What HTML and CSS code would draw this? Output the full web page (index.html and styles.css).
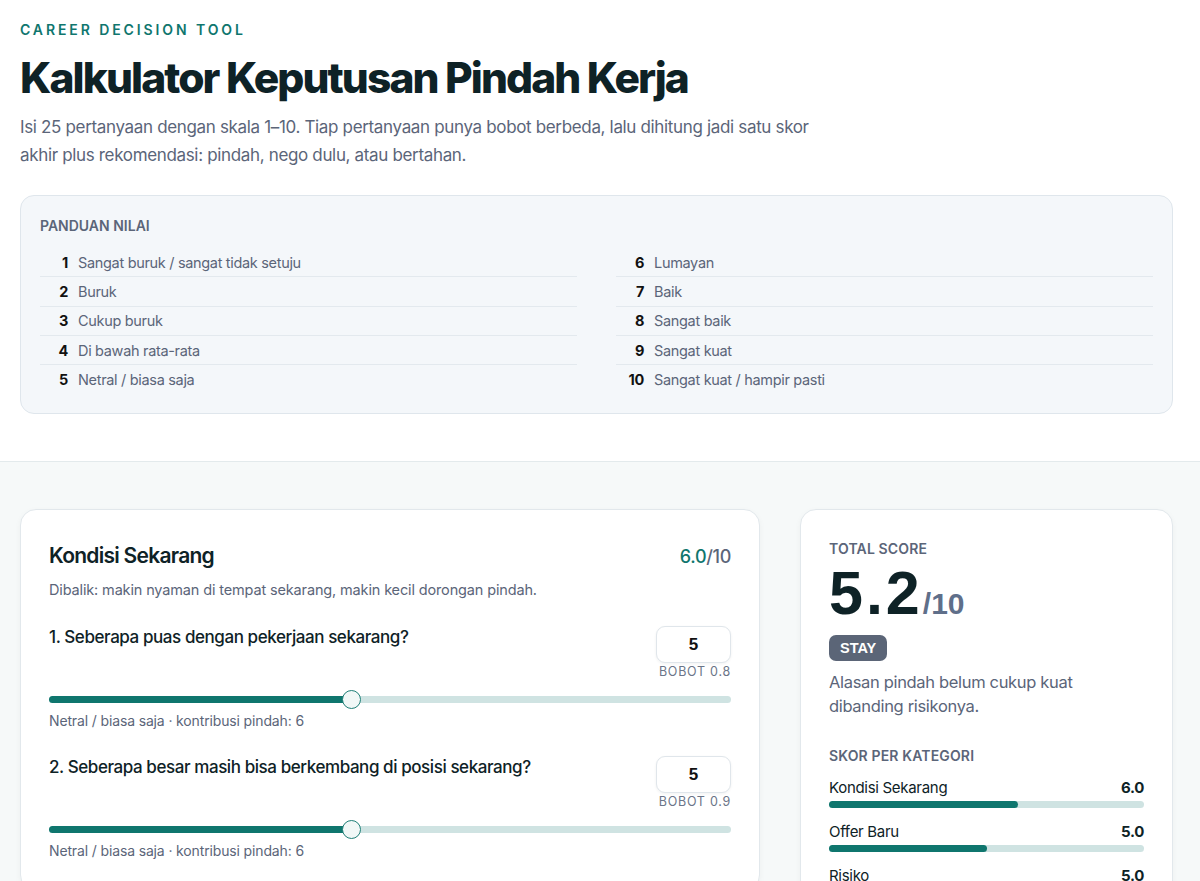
FILE: index.html
```html
<!DOCTYPE html>
<html lang="id">
<head>
<meta charset="utf-8">
<title>Kalkulator Keputusan Pindah Kerja</title>
<link rel="stylesheet" href="styles.css">
</head>
<body>
<header class="hero">
  <div class="eyebrow">CAREER DECISION TOOL</div>
  <h1 class="title">Kalkulator Keputusan Pindah Kerja</h1>
  <p class="lead">Isi 25 pertanyaan dengan skala 1–10. Tiap pertanyaan punya bobot berbeda, lalu dihitung jadi satu skor akhir plus rekomendasi: pindah, nego dulu, atau bertahan.</p>
  <section class="guide">
    <div class="guide-title">PANDUAN NILAI</div>
    <div class="guide-grid">
      <ul class="guide-list">
        <li><b>1</b><span>Sangat buruk / sangat tidak setuju</span></li>
        <li><b>2</b><span>Buruk</span></li>
        <li><b>3</b><span>Cukup buruk</span></li>
        <li><b>4</b><span>Di bawah rata-rata</span></li>
        <li><b>5</b><span>Netral / biasa saja</span></li>
      </ul>
      <ul class="guide-list">
        <li><b>6</b><span>Lumayan</span></li>
        <li><b>7</b><span>Baik</span></li>
        <li><b>8</b><span>Sangat baik</span></li>
        <li><b>9</b><span>Sangat kuat</span></li>
        <li><b>10</b><span>Sangat kuat / hampir pasti</span></li>
      </ul>
    </div>
  </section>
</header>
<main class="workspace">
  <section class="card questions">
    <div class="card-head">
      <h2>Kondisi Sekarang</h2>
      <div class="cat-score"><span class="accent">6.0</span>/10</div>
    </div>
    <p class="card-desc">Dibalik: makin nyaman di tempat sekarang, makin kecil dorongan pindah.</p>

    <div class="question">
      <div class="q-top">
        <div class="q-label">1. Seberapa puas dengan pekerjaan sekarang?</div>
        <div class="q-side">
          <div class="q-input">5</div>
          <div class="q-weight">BOBOT 0.8</div>
        </div>
      </div>
      <div class="slider"><div class="slider-fill" style="width:44.4%"></div><div class="slider-thumb" style="left:44.4%"></div></div>
      <div class="q-caption">Netral / biasa saja · kontribusi pindah: 6</div>
    </div>

    <div class="question">
      <div class="q-top">
        <div class="q-label">2. Seberapa besar masih bisa berkembang di posisi sekarang?</div>
        <div class="q-side">
          <div class="q-input">5</div>
          <div class="q-weight">BOBOT 0.9</div>
        </div>
      </div>
      <div class="slider"><div class="slider-fill" style="width:44.4%"></div><div class="slider-thumb" style="left:44.4%"></div></div>
      <div class="q-caption">Netral / biasa saja · kontribusi pindah: 6</div>
    </div>
  </section>

  <aside class="card summary">
    <div class="sum-label">TOTAL SCORE</div>
    <div class="total"><span class="total-num">5.2</span><span class="total-den">/10</span></div>
    <div class="badge">STAY</div>
    <p class="verdict">Alasan pindah belum cukup kuat dibanding risikonya.</p>
    <div class="sum-label cat-title">SKOR PER KATEGORI</div>
    <div class="cat-row">
      <div class="cat-line"><span>Kondisi Sekarang</span><b>6.0</b></div>
      <div class="bar"><div class="bar-fill" style="width:60%"></div></div>
    </div>
    <div class="cat-row">
      <div class="cat-line"><span>Offer Baru</span><b>5.0</b></div>
      <div class="bar"><div class="bar-fill" style="width:50%"></div></div>
    </div>
    <div class="cat-row">
      <div class="cat-line"><span>Risiko</span><b>5.0</b></div>
      <div class="bar"><div class="bar-fill" style="width:50%"></div></div>
    </div>
  </aside>
</main>
</body>
</html>
```
FILE: styles.css
```css
* { box-sizing: border-box; }
html, body { margin: 0; padding: 0; }
body {
  font-family: Inter, "Noto Sans", "Liberation Sans", sans-serif;
  color: #0f2226;
  background: #ffffff;
  letter-spacing: -0.02em;
}
.hero {
  padding: 20px 27px 47px 20px;
  background: #fff;
  border-bottom: 1px solid #e3eaec;
}
.eyebrow {
  color: #0f766e;
  font-size: 14px;
  font-weight: 600;
  letter-spacing: 2.9px;
  line-height: 20px;
}
.title {
  margin: 13px 0 0;
  font-size: 42.5px;
  font-weight: 800;
  letter-spacing: -0.045em;
  line-height: 50px;
  color: #0e2226;
}
.lead {
  margin: 10px 0 0;
  max-width: 800px;
  font-size: 17px;
  line-height: 28px;
  color: #5b6579;
  letter-spacing: -0.02em;
}
.guide {
  margin-top: 26px;
  background: #f4f7fa;
  border: 1px solid #dfe6ec;
  border-radius: 14px;
  padding: 20px 19px 19px 19px;
}
.guide-title {
  font-size: 14px;
  font-weight: 600;
  color: #5b6579;
  letter-spacing: 0;
  line-height: 20px;
}
.guide-grid {
  margin-top: 12px;
  display: grid;
  grid-template-columns: 1fr 1fr;
  column-gap: 39px;
}
.guide-list { list-style: none; margin: 0; padding: 0; }
.guide-list li {
  display: flex;
  align-items: center;
  height: 29.3px;
  border-bottom: 1px solid #e3e9ee;
  font-size: 14.5px;
  color: #5b6579;
}
.guide-list li:last-child { border-bottom: none; }
.guide-list b {
  width: 28px;
  text-align: right;
  margin-right: 10px;
  color: #111;
  font-weight: 700;
}
.workspace {
  background: #f6f9f9;
  padding: 47px 27px 40px 20px;
  display: grid;
  grid-template-columns: 740px 1fr;
  column-gap: 40px;
  align-items: start;
}
.card {
  background: #fff;
  border: 1px solid #e2e8ec;
  border-radius: 16px;
  box-shadow: 0 2px 6px rgba(15, 34, 38, 0.04);
}
.questions { padding: 31px 28px 30px 28px; }
.card-head {
  display: flex;
  justify-content: space-between;
  align-items: center;
}
.card-head h2 {
  margin: 0;
  font-size: 21px;
  font-weight: 600;
  letter-spacing: -0.035em;
  line-height: 30px;
  color: #0e2226;
}
.cat-score { font-size: 18px; font-weight: 500; color: #5b6579; }
.cat-score .accent { color: #0f766e; }
.card-desc {
  margin: 9px 0 0;
  font-size: 14.5px;
  color: #5b6579;
  line-height: 20px;
  letter-spacing: -0.01em;
}
.question { margin-top: 26px; }
.question + .question { margin-top: 26px; }
.q-top {
  display: flex;
  justify-content: space-between;
  align-items: flex-start;
}
.q-label {
  font-size: 17px;
  font-weight: 500;
  line-height: 22px;
  color: #0e2226;
  padding-top: 0;
  letter-spacing: -0.025em;
}
.q-side { display: flex; flex-direction: column; align-items: flex-end; }
.q-input {
  width: 75px;
  height: 37px;
  border: 1px solid #e0e6eb;
  border-radius: 9px;
  background: #fff;
  box-shadow: 0 1px 3px rgba(15, 34, 38, 0.06);
  display: flex;
  align-items: center;
  justify-content: center;
  font-family: "Liberation Sans", Arial, sans-serif;
  font-weight: 700;
  font-size: 17px;
  color: #111;
  letter-spacing: 0;
}
.q-weight {
  margin-top: 1px;
  font-size: 12.5px;
  color: #6b7588;
  letter-spacing: 0.06em;
  line-height: 16px;
}
.slider {
  position: relative;
  margin-top: 16px;
  height: 7px;
  border-radius: 4px;
  background: #cfe3e2;
}
.slider-fill {
  height: 100%;
  border-radius: 4px;
  background: #0f766e;
}
.slider-thumb {
  position: absolute;
  top: 50%;
  width: 19px;
  height: 19px;
  margin: -9.5px 0 0 -9.5px;
  border-radius: 50%;
  border: 1.5px solid #1f7f77;
  background: #f1f8f7;
}
.q-caption {
  margin-top: 9px;
  font-size: 14px;
  color: #5b6579;
  line-height: 18px;
  letter-spacing: -0.01em;
}
.summary { padding: 29px 28px 20px 28px; }
.sum-label {
  font-size: 14px;
  font-weight: 600;
  color: #5b6579;
  letter-spacing: 0.01em;
  line-height: 20px;
}
.total {
  margin-top: 4px;
  line-height: 60px;
  height: 60px;
  white-space: nowrap;
}
.total-num {
  font-family: "Liberation Sans", Arial, sans-serif;
  font-size: 61px;
  font-weight: 700;
  letter-spacing: 3px;
  color: #0e2226;
}
.total-den {
  font-family: "Liberation Sans", Arial, sans-serif;
  font-size: 30px;
  font-weight: 700;
  color: #5f6f8a;
  letter-spacing: 0;
}
.badge {
  margin-top: 12px;
  display: inline-block;
  background: #5b6577;
  color: #fff;
  font-family: "Liberation Sans", Arial, sans-serif;
  font-weight: 700;
  font-size: 14.5px;
  letter-spacing: 0;
  padding: 4px 11px;
  line-height: 18px;
  border-radius: 7px;
}
.verdict {
  margin: 9px 0 0;
  font-size: 16.5px;
  line-height: 24px;
  color: #5b6579;
  letter-spacing: -0.02em;
}
.cat-title { margin-top: 28px; }
.cat-row { margin-top: 12px; }
.cat-row + .cat-row { margin-top: 14px; }
.cat-line {
  display: flex;
  justify-content: space-between;
  font-size: 15px;
  line-height: 20px;
  color: #0e2226;
  letter-spacing: -0.02em;
}
.cat-line b { font-weight: 700; }
.bar {
  margin-top: 3px;
  height: 7px;
  border-radius: 4px;
  background: #cfe3e2;
}
.bar-fill {
  height: 100%;
  border-radius: 4px;
  background: #0f766e;
}
```
